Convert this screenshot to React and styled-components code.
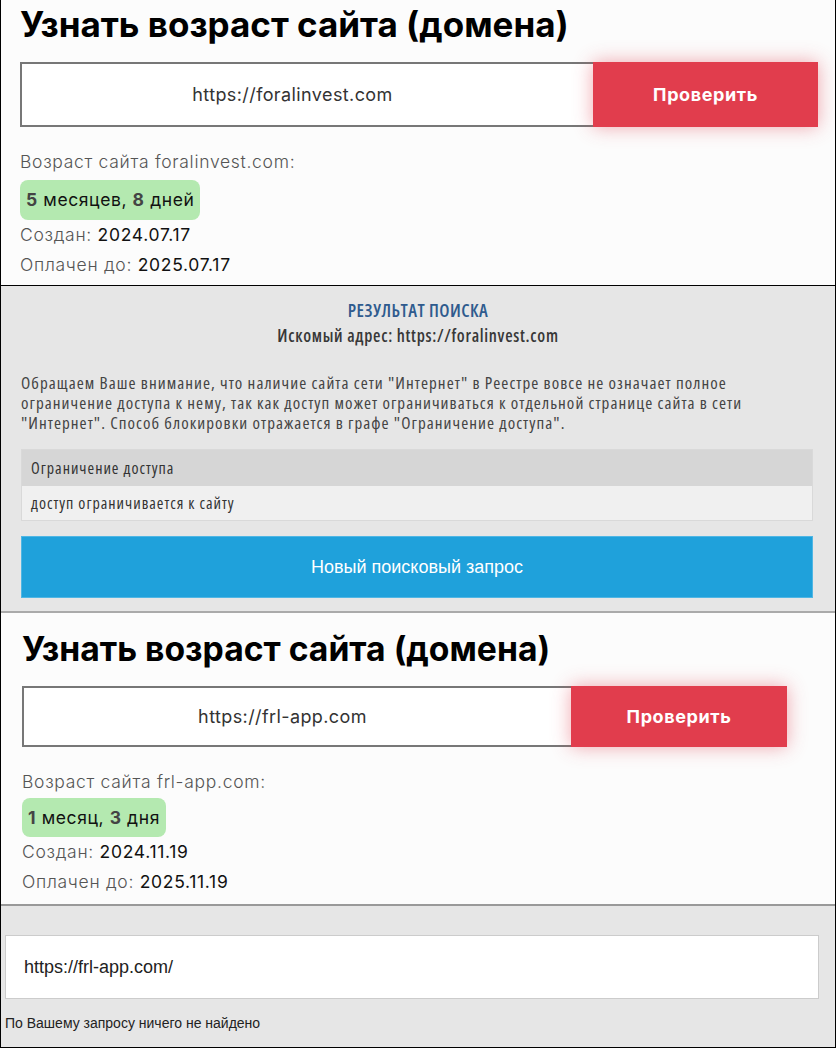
import React from "react";
import styled, { createGlobalStyle } from "styled-components";

const Global = createGlobalStyle`
  html, body { margin: 0; padding: 0; background: #fff; }
  body { width: 836px; height: 1048px; overflow: hidden; }
  * { box-sizing: border-box; }
`;

const Page = styled.div`
  width: 836px;
  height: 1048px;
  display: flex;
  flex-direction: column;
  border-left: 1px solid #000;
  border-right: 1px solid #000;
  border-bottom: 1px solid #000;
  overflow: hidden;
`;

const AgePanel = styled.section`
  background: #fcfcfc;
  height: ${(p) => p.$h}px;
  padding: ${(p) => p.$pt}px 0 0 ${(p) => p.$pl}px;
  border-bottom: ${(p) => p.$border};
  flex-shrink: 0;
  font-family: Inter, "Noto Sans", sans-serif;
`;

const Title = styled.h1`
  margin: 0;
  font-weight: 700;
  font-size: ${(p) => p.$size}px;
  line-height: 40px;
  height: 40px;
  color: #000;
  white-space: nowrap;
`;

const Form = styled.div`
  display: flex;
  width: ${(p) => p.$w}px;
  height: ${(p) => p.$h}px;
  margin-top: ${(p) => p.$mt}px;
`;

const UrlField = styled.div`
  flex: 1;
  background: #fff;
  border: 2px solid #777;
  border-right: none;
  display: flex;
  align-items: center;
  justify-content: center;
  padding-right: 30px;
  font-size: 18px;
  font-weight: 400;
  letter-spacing: 0.4px;
  color: #333;
`;

const CheckButton = styled.div`
  width: ${(p) => p.$w}px;
  background: #e13d4d;
  box-shadow: 0 0 18px rgba(225, 61, 77, 0.45);
  color: #fff;
  display: flex;
  align-items: center;
  justify-content: center;
  font-weight: 700;
  font-size: 18px;
  letter-spacing: 0.6px;
`;

const InfoLine = styled.div`
  font-size: 17.5px;
  font-weight: 300;
  letter-spacing: 0.7px;
  color: #555;
  line-height: 30px;
  height: 30px;
  white-space: nowrap;
  margin-top: ${(p) => p.$mt || 0}px;
  b {
    font-weight: 400;
    color: #111;
  }
`;

const Badge = styled.div`
  display: inline-block;
  height: ${(p) => p.$h}px;
  line-height: ${(p) => p.$h}px;
  margin-top: ${(p) => p.$mt}px;
  padding: 0 6px;
  background: #b4e9b0;
  border-radius: 8px;
  font-size: 17.5px;
  letter-spacing: 0.6px;
  color: #111;
  white-space: nowrap;
  b {
    font-weight: 700;
    color: #444;
  }
`;

const RegistryPanel = styled.section`
  background: #e6e6e6;
  height: 328px;
  padding: 14px 20px 0 20px;
  border-top: 1px solid #000;
  border-bottom: 2px solid #aaa;
  flex-shrink: 0;
  font-family: "Open Sans", sans-serif;
  font-stretch: 75%;
`;

const ResultHead = styled.div`
  text-align: center;
  color: #2f5b8e;
  font-size: 18px;
  font-weight: 600;
  letter-spacing: 0.5px;
  line-height: 20px;
  text-transform: uppercase;
`;

const SearchedAddr = styled.div`
  text-align: center;
  color: #383838;
  font-size: 17px;
  font-weight: 600;
  letter-spacing: 0.7px;
  line-height: 20px;
  margin-top: 6px;
`;

const Notice = styled.p`
  margin: 27px 0 0;
  width: 770px;
  color: #444;
  font-size: 17px;
  letter-spacing: 1.05px;
  line-height: 20px;
`;

const Table = styled.div`
  margin-top: 16px;
  border: 1px solid #d9d9d9;
  width: 792px;
`;

const Cell = styled.div`
  height: ${(p) => p.$h}px;
  background: ${(p) => p.$bg};
  display: flex;
  align-items: center;
  padding-left: 9px;
  color: #333;
  font-size: 16px;
  letter-spacing: 1px;
`;

const NewSearch = styled.div`
  margin-top: 15px;
  width: 792px;
  height: 62px;
  background: #1fa1db;
  border: 1px solid #4fb6e4;
  display: flex;
  align-items: center;
  justify-content: center;
  color: #fff;
  font-family: "Liberation Sans", Arial, sans-serif;
  font-stretch: normal;
  font-size: 18px;
`;

const SearchPanel = styled.section`
  flex: 1;
  background: #e6e6e6;
  padding: 29px 0 0 4px;
  font-family: "Liberation Sans", Arial, sans-serif;
`;

const SearchField = styled.div`
  width: 814px;
  height: 64px;
  background: #fff;
  border: 1px solid #ccc;
  display: flex;
  align-items: center;
  padding-left: 18px;
  font-size: 18px;
  color: #222;
`;

const NothingFound = styled.div`
  margin-top: 14px;
  font-size: 14px;
  line-height: 20px;
  color: #222;
`;

function AgeBlock({ h, pt, pl, border, titleSize, formW, formH, formMt, btnW, url, domain, age, created, paid, badgeH, badgeMt }) {
  return (
    <AgePanel $h={h} $pt={pt} $pl={pl} $border={border}>
      <Title $size={titleSize}>Узнать возраст сайта (домена)</Title>
      <Form $w={formW} $h={formH} $mt={formMt}>
        <UrlField>{url}</UrlField>
        <CheckButton $w={btnW}>Проверить</CheckButton>
      </Form>
      <InfoLine $mt={20}>Возраст сайта {domain}:</InfoLine>
      <Badge $h={badgeH} $mt={badgeMt}>{age}</Badge>
      <InfoLine>
        Создан: <b>{created}</b>
      </InfoLine>
      <InfoLine>
        Оплачен до: <b>{paid}</b>
      </InfoLine>
    </AgePanel>
  );
}

export default function App() {
  return (
    <>
      <Global />
      <Page>
        <AgeBlock
          h={285}
          pt={4}
          pl={19}
          border="none"
          titleSize={35}
          formW={798}
          formH={65}
          formMt={18}
          btnW={225}
          url="https://foralinvest.com"
          domain="foralinvest.com"
          age={<><b>5</b> месяцев, <b>8</b> дней</>}
          created="2024.07.17"
          paid="2025.07.17"
          badgeH={40}
          badgeMt={3}
        />
        <RegistryPanel>
          <ResultHead>Результат поиска</ResultHead>
          <SearchedAddr>Искомый адрес: https://foralinvest.com</SearchedAddr>
          <Notice>
            Обращаем Ваше внимание, что наличие сайта сети "Интернет" в Реестре вовсе не означает полное
            ограничение доступа к нему, так как доступ может ограничиваться к отдельной странице сайта в сети
            "Интернет". Способ блокировки отражается в графе "Ограничение доступа".
          </Notice>
          <Table>
            <Cell $h={36} $bg="#d6d6d6">Ограничение доступа</Cell>
            <Cell $h={34} $bg="#f0f0f0">доступ ограничивается к сайту</Cell>
          </Table>
          <NewSearch>Новый поисковый запрос</NewSearch>
        </RegistryPanel>
        <AgeBlock
          h={293}
          pt={16}
          pl={21}
          border="2px solid #999"
          titleSize={33.7}
          formW={765}
          formH={61}
          formMt={17}
          btnW={216}
          url="https://frl-app.com"
          domain="frl-app.com"
          age={<><b>1</b> месяц, <b>3</b> дня</>}
          created="2024.11.19"
          paid="2025.11.19"
          badgeH={39}
          badgeMt={1}
        />
        <SearchPanel>
          <SearchField>https://frl-app.com/</SearchField>
          <NothingFound>По Вашему запросу ничего не найдено</NothingFound>
        </SearchPanel>
      </Page>
    </>
  );
}
